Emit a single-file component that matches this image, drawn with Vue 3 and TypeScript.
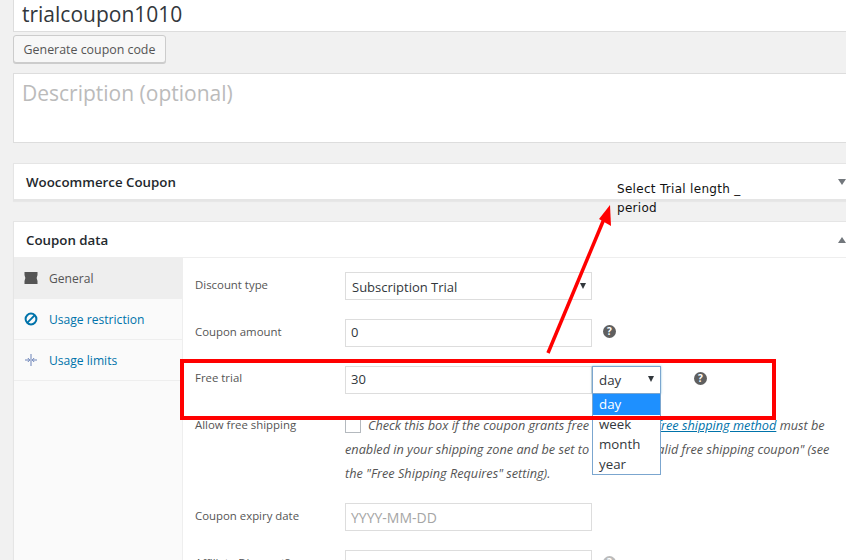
<script setup lang="ts">
const units = ["week", "month", "year"]
</script>

<template>
  <div class="page">
    <div class="title-input">trialcoupon1010</div>
    <button class="gen-btn">Generate coupon code</button>
    <div class="desc">Description (optional)</div>

    <div class="box woo">
      <h2>Woocommerce Coupon</h2>
      <span class="caret down"></span>
    </div>

    <div class="box data">
      <div class="data-head">
        <h2>Coupon data</h2>
        <span class="caret up"></span>
      </div>
      <div class="data-body">
        <ul class="tabs">
          <li class="active">
            <svg width="14" height="14" viewBox="0 0 14 14"><path d="M.5 1h13v3Q11.800 7 13.500 10V13H.5v-3Q2.200 7 .5 4z" fill="#555" /></svg>
            <span>General</span>
          </li>
          <li>
            <svg width="14" height="14" viewBox="0 0 14 14"><circle cx="7" cy="7" r="5.4" fill="none" stroke="#0073aa" stroke-width="2" /><path d="M3.4 10.6l7.2-7.2" stroke="#0073aa" stroke-width="2" /></svg>
            <span>Usage restriction</span>
          </li>
          <li>
            <svg width="14" height="14" viewBox="0 0 14 14"><path d="M7 1v12M1 7h4.500M13 7H8.500M3.800 5l2 2-2 2M10.200 5l-2 2 2 2" fill="none" stroke="#6b82b8" stroke-width="1" /></svg>
            <span>Usage limits</span>
          </li>
        </ul>

        <div class="panel">
          <div class="field">
            <label>Discount type</label>
            <div class="ctl select">Subscription Trial<span class="sel-caret"></span></div>
          </div>
          <div class="field">
            <label>Coupon amount</label>
            <div class="ctl num">0</div>
            <span class="help help-a">?</span>
          </div>
          <div class="field">
            <label class="tight">Free trial</label>
            <div class="ctl num">30</div>
            <div class="unit">
              <div class="unit-sel">day<span class="sel-caret"></span></div>
              <ul class="unit-list">
                <li class="on">day</li>
                <li v-for="u in units" :key="u">{{ u }}</li>
              </ul>
            </div>
            <span class="help help-b">?</span>
          </div>
          <div class="field ship">
            <label class="tight">Allow free shipping</label>
            <p class="ship-text">
              <span class="check"></span><em>Check this box if the coupon grants free shipping. A <a>free shipping method</a> must be enabled in your shipping zone and be set to require "a valid free shipping coupon" (see the "Free Shipping Requires" setting).</em>
            </p>
          </div>
          <div class="field">
            <label>Coupon expiry date</label>
            <div class="ctl placeholder">YYYY-MM-DD</div>
          </div>
          <div class="field">
            <label>Affiliate Discount?</label>
            <div class="ctl"></div>
            <span class="help help-a faded">?</span>
          </div>
        </div>
      </div>
    </div>

    <!-- annotation drawn over the screenshot -->
    <div class="red-box"></div>
    <svg class="arrow" width="846" height="560" viewBox="0 0 846 560">
      <path d="M548 353L604 219" stroke="#f00" stroke-width="3.500" fill="none" />
      <path d="M610 205L611 226L599 219z" fill="#f00" />
    </svg>
    <div class="note">Select Trial length _<br />period</div>
  </div>
</template>

<style>
html, body {
  margin: 0;
  background: #f1f1f1;
}
</style>

<style scoped>
.page {
  position: relative;
  width: 846px;
  height: 560px;
  overflow: hidden;
  padding-left: 13px;
  box-sizing: border-box;
  background: #f1f1f1;
  font-family: "Open Sans", sans-serif;
  color: #32373c;
}

.title-input {
  height: 32px;
  box-sizing: border-box;
  border: 1px solid #ddd;
  border-top: 0;
  border-right: 0;
  background: #fff;
  padding-left: 8px;
  font-size: 21px;
  line-height: 28px;
  color: #32373c;
}

.gen-btn {
  display: block;
  margin-top: 3px;
  width: 153px;
  height: 28px;
  box-sizing: border-box;
  padding: 0;
  border: 1px solid #ccc;
  border-radius: 3px;
  background: #f7f7f7;
  box-shadow: 0 1px 0 #ccc;
  font-family: inherit;
  font-size: 12.4px;
  color: #555;
}

.desc {
  margin-top: 10px;
  height: 70px;
  box-sizing: border-box;
  border: 1px solid #ddd;
  border-right: 0;
  background: #fff;
  padding-left: 8px;
  font-size: 21px;
  line-height: 39px;
  color: #bbb;
}

.box {
  background: #fff;
  border: 1px solid #e5e5e5;
  border-right: 0;
  box-shadow: 0 1px 1px rgba(0, 0, 0, 0.04);
}

.box h2 {
  margin: 0;
  font-size: 13.3px;
  font-weight: 600;
  color: #23282d;
}

.woo {
  position: relative;
  margin-top: 20px;
  height: 38px;
  box-sizing: border-box;
  display: flex;
  align-items: center;
  padding-left: 12px;
  border-bottom: 2px solid #e5e5e5;
}

.caret {
  position: absolute;
  right: 0;
  width: 0;
  height: 0;
  border-left: 4px solid transparent;
  border-right: 4px solid transparent;
}

.caret.down {
  top: 15px;
  border-top: 6px solid #72777c;
}

.caret.up {
  top: 15px;
  border-bottom: 6px solid #72777c;
}

.data {
  margin-top: 20px;
}

.data-head {
  position: relative;
  height: 35px;
  display: flex;
  align-items: center;
  padding-left: 12px;
  border-bottom: 1px solid #eee;
}

.data-body {
  display: flex;
  height: 320px;
}

.tabs {
  list-style: none;
  margin: 0;
  padding: 0;
  width: 169px;
  flex: none;
  box-sizing: border-box;
  background: #fafafa;
  border-right: 1px solid #eee;
}

.tabs li {
  height: 41px;
  box-sizing: border-box;
  display: flex;
  align-items: center;
  gap: 11px;
  padding-left: 10px;
  border-bottom: 1px solid #eee;
  font-size: 12.1px;
  color: #0073aa;
}

.tabs li.active {
  background: #eee;
  color: #555;
}

.panel {
  flex: 1;
  padding-top: 14px;
}

.field {
  position: relative;
  display: flex;
  padding-left: 12px;
  margin-bottom: 19px;
}

.field label {
  width: 150px;
  flex: none;
  font-size: 11.4px;
  line-height: 26px;
  color: #555;
}

.field label.tight {
  line-height: 24px;
}

.ctl {
  width: 247px;
  height: 28px;
  box-sizing: border-box;
  border: 1px solid #ddd;
  background: #fff;
  padding-left: 5px;
  font-size: 13px;
  line-height: 28px;
  color: #32373c;
}

.ctl.num {
  line-height: 25px;
}

.placeholder {
  color: #a5a5a5;
  font-size: 14px;
}

.select {
  position: relative;
  padding-left: 6px;
}

.sel-caret {
  position: absolute;
  top: 10px;
  right: 5px;
  width: 0;
  height: 0;
  border-left: 3px solid transparent;
  border-right: 3px solid transparent;
  border-top: 6px solid #32373c;
}

.help {
  position: absolute;
  top: 6px;
  width: 13px;
  height: 13px;
  border-radius: 50%;
  background: #5f5f5f;
  color: #fff;
  font-size: 10px;
  font-weight: 700;
  line-height: 13px;
  text-align: center;
}

.help-a {
  left: 420px;
}

.help-b {
  left: 511px;
}

.faded {
  background: #bbb;
}

.unit {
  position: relative;
  width: 69px;
  height: 28px;
  flex: none;
}

.unit-sel {
  position: relative;
  height: 28px;
  box-sizing: border-box;
  border: 1px solid #7ba6cf;
  background: #fff;
  padding-left: 6px;
  font-size: 13.3px;
  line-height: 27px;
  box-shadow: 0 0 2px rgba(30, 140, 190, 0.5);
}

.unit-sel .sel-caret {
  right: 6px;
  top: 9px;
}

.unit-list {
  position: absolute;
  top: 28px;
  left: 0;
  z-index: 2;
  list-style: none;
  margin: 0;
  padding: 0;
  width: 69px;
  box-sizing: border-box;
  border: 1px solid #7ba6cf;
  border-top: 0;
  background: #fff;
  font-size: 13.3px;
}

.unit-list li {
  height: 20px;
  padding-left: 6px;
  line-height: 20px;
}

.unit-list li.on {
  height: 21px;
  margin-bottom: -1px;
  background: #1e90ff;
  color: #fff;
}

.ship {
  margin-top: 4px;
  margin-bottom: 18px;
}

.ship-text {
  margin: 0;
  width: 486px;
  flex: none;
  font-size: 12.7px;
  line-height: 24px;
  color: #555;
}

.ship-text a {
  color: #0073aa;
  text-decoration: underline;
}

.check {
  display: inline-block;
  width: 16px;
  height: 16px;
  box-sizing: border-box;
  border: 1px solid #b4b9be;
  background: #fff;
  margin-right: 7px;
  vertical-align: -3px;
}

.red-box {
  position: absolute;
  left: 180px;
  top: 359px;
  width: 596px;
  height: 61px;
  box-sizing: border-box;
  border: 4px solid #f00;
  z-index: 3;
}

.arrow {
  position: absolute;
  left: 0;
  top: 0;
  z-index: 3;
}

.note {
  position: absolute;
  left: 617px;
  top: 180px;
  z-index: 3;
  font-family: "DejaVu Sans", sans-serif;
  font-size: 12px;
  letter-spacing: 0.3px;
  line-height: 19px;
  color: #111;
}
</style>
